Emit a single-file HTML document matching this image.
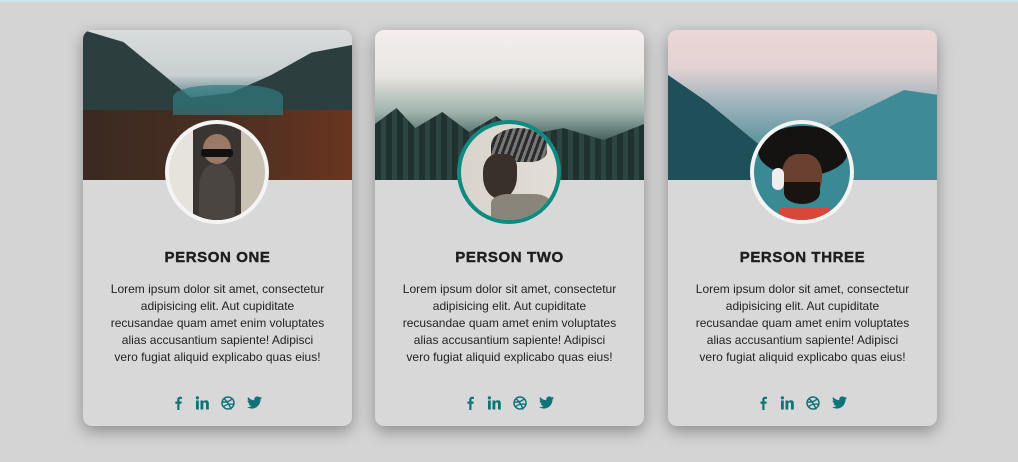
<!DOCTYPE html>
<html><head><meta charset="utf-8"><style>
*{margin:0;padding:0;box-sizing:border-box}
body{width:1018px;height:462px;background:#d4d4d4;font-family:"Liberation Sans",sans-serif;position:relative;overflow:hidden}
.line{position:absolute;left:0;top:0;width:100%;height:2px;background:#cde3ea}
.card{position:absolute;top:30px;width:269px;height:396px;background:#d8d8d8;border-radius:9px;overflow:hidden;box-shadow:0 5px 16px rgba(0,0,0,.35)}
.img{height:150px;position:relative;overflow:hidden}
.av{position:absolute;left:82px;top:90px;width:104px;height:104px;border-radius:50%;border:4px solid #f4f4f4;overflow:hidden}
h2{position:absolute;top:219px;width:100%;text-align:center;font-size:15px;font-weight:bold;color:#1e1e1e;letter-spacing:.6px;-webkit-text-stroke:.4px #1e1e1e}
p{position:absolute;top:251px;left:0;right:0;text-align:center;font-size:12px;line-height:17px;color:#222;white-space:nowrap}
.ic{position:absolute;top:364px;left:0;width:100%;text-align:center}
.ic svg{margin:0 6px;vertical-align:middle}
</style></head><body>
<div class="line"></div>

<div class="card" style="left:83px">
 <div class="img" style="background:linear-gradient(180deg,#d8dcdc 0%,#c9cfd0 30%,#3d6e72 50%,#2c3a3a 65%,#3a2a22 85%,#5a3222 100%)">
  <div style="position:absolute;left:0;top:0;width:269px;height:150px;background:#2c3e3e;clip-path:polygon(0 0,15% 8%,30% 30%,40% 45%,55% 42%,70% 30%,85% 15%,100% 10%,100% 100%,0 100%)"></div>
  <div style="position:absolute;left:0;top:80px;width:269px;height:70px;background:linear-gradient(90deg,#3a2a22,#4a2e22 50%,#6a3520)"></div>
  <div style="position:absolute;left:90px;top:55px;width:110px;height:30px;background:#2f7a82;opacity:.7;border-radius:40% 40% 0 0"></div>
 </div>
 <div class="av" style="background:linear-gradient(90deg,#e6e3dc 0 25%,#3a3530 25% 75%,#c9c2b4 75%)">
  <div style="position:absolute;left:34px;top:10px;width:28px;height:30px;background:#9a7a66;border-radius:50%"></div>
  <div style="position:absolute;left:32px;top:25px;width:32px;height:8px;background:#111;border-radius:3px"></div>
  <div style="position:absolute;left:30px;top:40px;width:36px;height:60px;background:#4a4540;border-radius:40% 40% 10% 10%"></div>
 </div>
 <h2>PERSON ONE</h2>
 <p>Lorem ipsum dolor sit amet, consectetur<br>adipisicing elit. Aut cupiditate<br>recusandae quam amet enim voluptates<br>alias accusantium sapiente! Adipisci<br>vero fugiat aliquid explicabo quas eius!</p>
 <div class="ic">ICONS</div>
</div>

<div class="card" style="left:375px">
 <div class="img" style="background:linear-gradient(180deg,#f4eeee 0%,#e8e6e2 30%,#9fb2ac 55%,#3e5a55 75%,#1e2e2c 100%)">
  <div style="position:absolute;left:0;bottom:0;width:269px;height:80px;background:repeating-linear-gradient(90deg,#1f3230 0 6px,#2e4642 6px 11px);clip-path:polygon(0 30%,8% 10%,15% 35%,25% 15%,35% 40%,45% 20%,55% 45%,70% 35%,85% 50%,100% 30%,100% 100%,0 100%)"></div>
 </div>
 <div class="av" style="border-color:#0f8a80;background:linear-gradient(90deg,#d8d4cc,#e2ded6)">
  <div style="position:absolute;left:30px;top:4px;width:56px;height:34px;background:repeating-linear-gradient(110deg,#2a2a2a 0 3px,#777 3px 6px);border-radius:50% 50% 30% 20%"></div>
  <div style="position:absolute;left:22px;top:30px;width:34px;height:45px;background:#3a302a;border-radius:40% 30% 50% 50%"></div>
  <div style="position:absolute;left:30px;top:70px;width:60px;height:30px;background:#8a857a;border-radius:30% 30% 0 0"></div>
 </div>
 <h2>PERSON TWO</h2>
 <p>Lorem ipsum dolor sit amet, consectetur<br>adipisicing elit. Aut cupiditate<br>recusandae quam amet enim voluptates<br>alias accusantium sapiente! Adipisci<br>vero fugiat aliquid explicabo quas eius!</p>
 <div class="ic">ICONS</div>
</div>

<div class="card" style="left:668px">
 <div class="img" style="background:linear-gradient(180deg,#ecd6d6 0%,#e4d2d4 25%,#a8b8c0 45%,#6a9aa4 70%,#3d7b86 100%)">
  <div style="position:absolute;left:0;top:45px;width:100px;height:110px;background:#1f4f58;clip-path:polygon(0 0,40% 25%,100% 70%,100% 100%,0 100%)"></div>
  <div style="position:absolute;right:0;top:60px;width:110px;height:95px;background:#3e8a96;clip-path:polygon(0 40%,70% 0,100% 5%,100% 100%,0 100%)"></div>
 </div>
 <div class="av" style="background:#3a8a96">
  <div style="position:absolute;left:4px;top:2px;width:90px;height:50px;background:#151212;border-radius:50%"></div>
  <div style="position:absolute;left:28px;top:30px;width:40px;height:48px;background:#6a4030;border-radius:40% 40% 50% 50%"></div>
  <div style="position:absolute;left:30px;top:58px;width:36px;height:22px;background:#1a1410;border-radius:0 0 50% 50%"></div>
  <div style="position:absolute;left:18px;top:44px;width:12px;height:22px;background:#eee;border-radius:6px"></div>
  <div style="position:absolute;left:25px;top:84px;width:50px;height:20px;background:#d9473a"></div>
 </div>
 <h2>PERSON THREE</h2>
 <p>Lorem ipsum dolor sit amet, consectetur<br>adipisicing elit. Aut cupiditate<br>recusandae quam amet enim voluptates<br>alias accusantium sapiente! Adipisci<br>vero fugiat aliquid explicabo quas eius!</p>
 <div class="ic">ICONS</div>
</div>

<script>
var s='<svg width="10" height="14" viewBox="0 0 10 14"><path d="M6.5 14V7.8h2l.3-2.3H6.5V4c0-.7.2-1.1 1.1-1.1H9V.9C8.7.8 8 .7 7.2.7 5.5.7 4.3 1.7 4.3 3.7v1.8H2.4v2.3h1.9V14z" fill="#0f7478"/></svg>'+
'<svg width="14" height="14" viewBox="0 0 14 14"><rect x="1" y="4.5" width="2.8" height="9" fill="#0f7478"/><circle cx="2.4" cy="1.9" r="1.6" fill="#0f7478"/><path d="M5.5 4.5h2.7v1.3c.5-.9 1.5-1.5 2.8-1.5 2.2 0 2.8 1.4 2.8 3.4v5.8H11V8.3c0-1.1-.2-1.9-1.3-1.9S8.3 7.3 8.3 8.3v5.2H5.5z" fill="#0f7478"/></svg>'+
'<svg width="14" height="14" viewBox="0 0 14 14" fill="none" stroke="#0f7478" stroke-width="1.5"><circle cx="7" cy="7" r="6"/><path d="M3 2.5c3 3 6 7 7 11M1.2 6c4 .5 8-1 10.5-3.5M2.5 11c2-2.5 6-3.5 10.5-2.5"/></svg>'+
'<svg width="15" height="13" viewBox="0 0 16 13"><path d="M16 1.5c-.6.3-1.2.4-1.9.5.7-.4 1.2-1 1.4-1.8-.6.4-1.3.6-2.1.8A3.3 3.3 0 0 0 7.8 4C5.1 3.9 2.6 2.6 1.1.6.3 2 .7 3.9 2.1 4.8c-.5 0-1-.2-1.5-.4 0 1.6 1.1 3 2.6 3.3-.5.1-1 .2-1.5.1.4 1.3 1.7 2.3 3.1 2.3A6.6 6.6 0 0 1 0 11.4 9.3 9.3 0 0 0 5 13c6 0 9.4-5 9.4-9.4v-.4c.7-.5 1.2-1 1.6-1.7z" fill="#0f7478"/></svg>';
document.querySelectorAll('.ic').forEach(function(e){e.innerHTML=s});
</script>
</body></html>
